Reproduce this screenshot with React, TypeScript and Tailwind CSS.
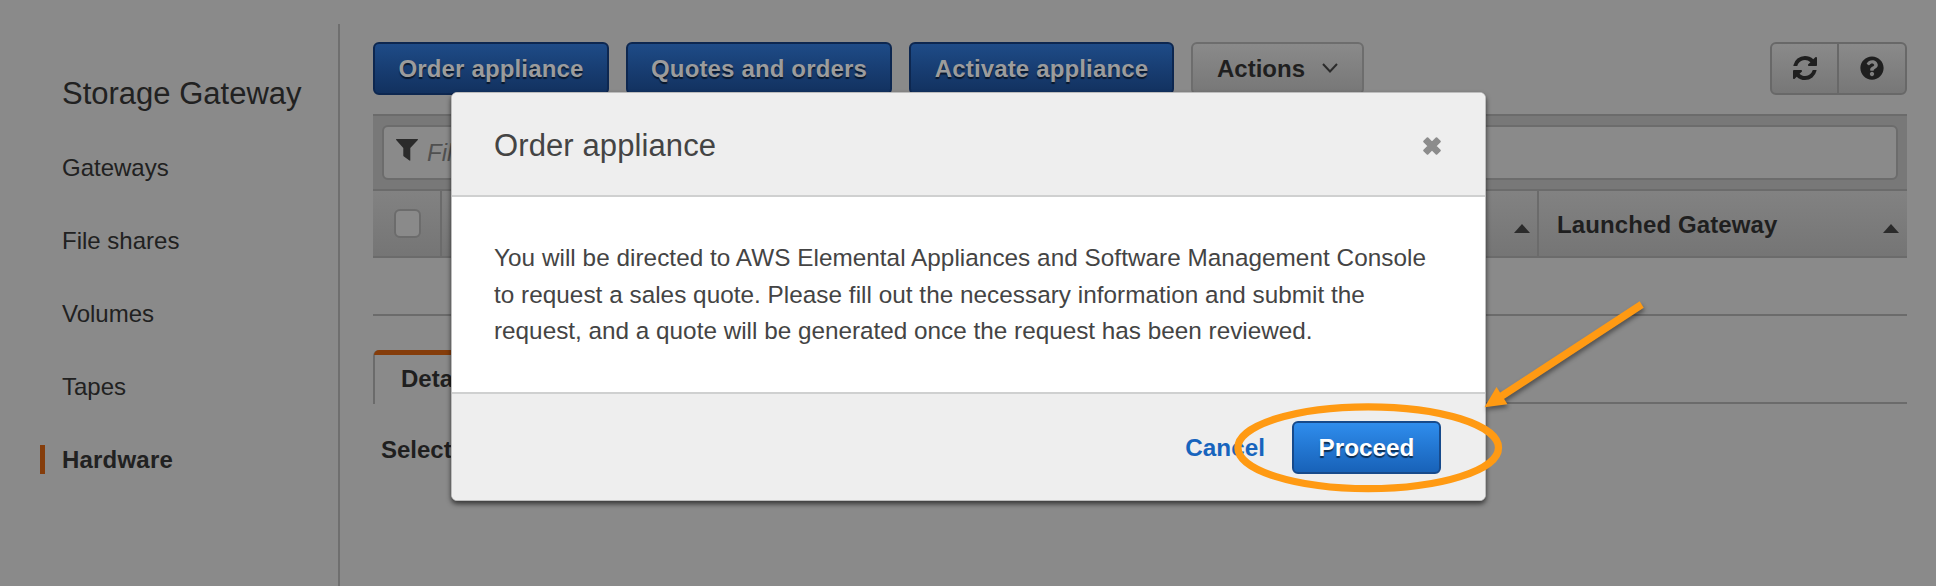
import { clsx } from "clsx";
import { FaQuestionCircle } from "react-icons/fa";

const navItems = ["Gateways", "File shares", "Volumes", "Tapes", "Hardware"];

const primaryActions = [
  { label: "Order appliance", width: "w-[236px]" },
  { label: "Quotes and orders", width: "w-[266px]" },
  { label: "Activate appliance", width: "w-[265px]" },
];

function FilterIcon() {
  return (
    <svg viewBox="0 0 22 22" className="mb-[6px] h-[22px] w-[22px] fill-[#2b2b2b]">
      <path d="M.6 0h20.8c.6 0 .8.6.4 1L14.300 9v12.200c0 .6-.5.7-.9.400L7.600 17.300a1 1 0 0 1-.3-.7V9L.2 1C-.2.6 0 0 .6 0z" />
    </svg>
  );
}

function RefreshIcon() {
  return (
    <svg viewBox="0 128 1536 1536" className="h-6 w-6 fill-[#1f1f1f]">
      <path d="M1511 1056q0 5-1 7-64 268-268 434.500t-478 166.500q-146 0-282.500-55t-243.500-157l-129 129q-19 19-45 19t-45-19-19-45v-448q0-26 19-45t45-19h448q26 0 45 19t19 45-19 45l-137 137q71 66 161 102t187 36q134 0 250-65t186-179q11-17 53-117 8-23 30-23h192q13 0 22.500 9.500t9.500 22.500zm25-800v448q0 26-19 45t-45 19h-448q-26 0-45-19t-19-45 19-45l138-138q-148-137-349-137-134 0-250 65t-186 179q-11 17-53 117-8 23-30 23h-199q-13 0-22.500-9.500t-9.500-22.500v-7q65-268 270-434.500t480-166.500q146 0 284 55.500t245 156.500l130-129q19-19 45-19t45 19 19 45z" />
    </svg>
  );
}

function CloseIcon() {
  return (
    <svg viewBox="0 0 18 18" className="h-[18px] w-[18px] fill-[#8c8c8c] stroke-[#8c8c8c] stroke-2">
      <path
        strokeLinejoin="round"
        d="M4.500 1.200 9 5.700l4.500-4.500 3.300 3.300L12.300 9l4.500 4.500-3.300 3.300L9 12.300l-4.500 4.500-3.300-3.300L5.700 9 1.200 4.500z"
      />
    </svg>
  );
}

function SortIcon() {
  return (
    <svg viewBox="0 0 16 9" className="mt-[9px] h-[9px] w-4 fill-[#2b2b2b]">
      <path d="M8 0l8 9H0z" />
    </svg>
  );
}

function Sidebar() {
  return (
    <nav className="mt-6 w-[340px] shrink-0 border-r-2 border-[#6f6f6f] text-[#212121]">
      <h1 className="mt-[51px] pl-[62px] text-[31px] leading-[38px]">Storage Gateway</h1>
      <ul className="mt-[18px]">
        {navItems.map((item) => (
          <li
            key={item}
            className={clsx(
              "flex h-[73px] items-center pl-[62px] text-[24px]",
              item === "Hardware" && "font-bold tracking-[0.2px]"
            )}
          >
            {item === "Hardware" && <span className="-ml-[22px] mr-[17px] h-[29px] w-[5px] bg-[#853d0b]" />}
            {item}
          </li>
        ))}
      </ul>
    </nav>
  );
}

function Toolbar() {
  return (
    <div className="flex h-[53px] w-full gap-[17px]">
      {primaryActions.map((action) => (
        <button
          key={action.label}
          className={clsx(
            "h-[53px] shrink-0 rounded-[6px] border-2 border-[#0d2750] bg-linear-to-b from-[#1e4b87] to-[#12315f] pt-px text-[24px] font-bold tracking-[0.15px] text-[#9c9c9c] text-shadow-[0_2px_1px_rgb(0_0_0/0.6)]",
            action.width
          )}
        >
          {action.label}
        </button>
      ))}
      <button className="flex h-[53px] w-[173px] items-center rounded-[6px] border-2 border-[#6d6d6d] bg-linear-to-b from-[#8a8a8a] to-[#777] pt-px pl-6 text-[24px] font-bold text-[#1f1f1f]">
        Actions
        <svg viewBox="0 0 16 10" className="mb-[3px] ml-[17px] h-[10px] w-4 fill-none stroke-[#2b2b2b] stroke-2">
          <path d="M1 1l7 7.500L15 1" />
        </svg>
      </button>
      <div className="ml-auto flex h-[53px] w-[137px] rounded-[6px] border-2 border-[#686868] bg-linear-to-b from-[#8a8a8a] to-[#777]">
        <button className="flex w-[67px] items-center justify-center border-r-2 border-[#686868] pb-px">
          <RefreshIcon />
        </button>
        <button className="flex flex-1 items-center justify-center pb-px">
          <FaQuestionCircle className="text-[24px] text-[#1f1f1f]" />
        </button>
      </div>
    </div>
  );
}

function HardwareTable() {
  return (
    <div className="mt-[19px] border-t-2 border-[#6b6b6b]">
      <div className="bg-[#787878] px-[9px] py-[9px]">
        <div className="flex h-[55px] items-center gap-[9px] rounded-[6px] border-2 border-[#6c6c6c] bg-[#8a8a8a] pl-3">
          <FilterIcon />
          <span className="text-[24px] text-[#505050] italic">Filter</span>
        </div>
      </div>
      <div className="flex h-[69px] border-y-2 border-[#6b6b6b] bg-linear-to-b from-[#828282] to-[#757575]">
        <div className="flex w-[69px] items-center border-r-2 border-[#6b6b6b] pl-[21px]">
          <span className="h-[29px] w-[27px] rounded-[6px] border-2 border-[#6c6c6c] bg-[#8a8a8a]" />
        </div>
        <div className="flex w-[1097px] items-center justify-end border-r-2 border-[#6b6b6b] pr-[7px]">
          <SortIcon />
        </div>
        <div className="flex flex-1 items-center justify-between pr-2 pl-[18px]">
          <span className="pt-0.5 text-[24px] font-bold tracking-[0.1px] text-[#1f1f1f]">Launched Gateway</span>
          <SortIcon />
        </div>
      </div>
      <div className="h-[58px] border-b-2 border-[#6b6b6b]" />
    </div>
  );
}

function Details() {
  return (
    <div className="mt-[34px]">
      <div className="flex h-[54px]">
        <div className="flex w-[130px] flex-col rounded-t-[6px] border-l-2 border-[#6b6b6b]">
          <div className="-ml-px h-[5px] shrink-0 rounded-tl-[5px] bg-[#853d0b]" />
          <span className="pt-[6px] pl-[26px] text-[24px] font-bold text-[#1f1f1f]">Details</span>
        </div>
        <div className="flex-1 border-b-2 border-[#6b6b6b]" />
      </div>
      <p className="mt-7 pl-2 text-[24px] font-bold text-[#1f1f1f]">Select an appliance</p>
    </div>
  );
}

function OrderModal() {
  return (
    <div className="absolute top-[92px] left-[451px] flex h-[409px] w-[1035px] flex-col overflow-hidden rounded-[6px] border border-[#bdbdbd] bg-white shadow-[0_3px_5px_rgb(0_0_0/0.6)]">
      <header className="flex h-[104px] shrink-0 items-center justify-between border-b-2 border-[#cfd0d0] bg-[#eee] pt-1 pr-[44px] pl-[42px]">
        <h2 className="text-[31px] tracking-[0.1px] text-[#444]">Order appliance</h2>
        <CloseIcon />
      </header>
      <p className="flex-1 pt-[43px] pl-[42px] text-[24.300px] leading-[36.500px] text-[#444]">
        <span className="tracking-[0.04px]">
          You will be directed to AWS Elemental Appliances and Software Management Console
        </span>
        <br />
        <span className="tracking-[0.03px]">
          to request a sales quote. Please fill out the necessary information and submit the
        </span>
        <br />
        request, and a quote will be generated once the request has been reviewed.
      </p>
      <footer className="flex h-[108px] shrink-0 items-center justify-end gap-[27px] border-t-2 border-[#cfd0d0] bg-[#eee] pr-[44px] text-[24.300px] font-bold">
        <button className="pt-0.5 text-[#1764bd]">Cancel</button>
        <button className="h-[53px] w-[149px] rounded-[6px] border-2 border-[#174a8b] bg-linear-to-b from-[#2f8ded] to-[#1862b8] pt-0.5 text-white text-shadow-[0_2px_1px_rgb(0_0_0/0.6)]">
          Proceed
        </button>
      </footer>
    </div>
  );
}

function Callout() {
  return (
    <svg viewBox="0 0 430 220" className="pointer-events-none absolute top-[290px] left-[1220px] h-[220px] w-[430px] overflow-visible">
      <ellipse cx="148.200" cy="157.700" rx="130.300" ry="40.900" fill="none" stroke="#ff9a13" strokeWidth="7.300" />
      <g className="drop-shadow-[1px_3px_2px_rgb(0_0_0/0.4)]">
        <path d="M421.700 14.500L280 107.200" stroke="#ff9a13" strokeWidth="7.500" />
        <path d="M264.500 117.300L276.500 97l11 17.200z" fill="#ff9a13" />
      </g>
    </svg>
  );
}

export default function App() {
  return (
    <div className="relative flex h-[586px] w-[1936px] overflow-hidden bg-[#8a8a8a] font-['Liberation_Sans',Arial,sans-serif]">
      <Sidebar />
      <main className="w-[1568px] shrink-0 pt-[42px] pr-[1px] pl-[33px]">
        <Toolbar />
        <HardwareTable />
        <Details />
      </main>
      <OrderModal />
      <Callout />
    </div>
  );
}
